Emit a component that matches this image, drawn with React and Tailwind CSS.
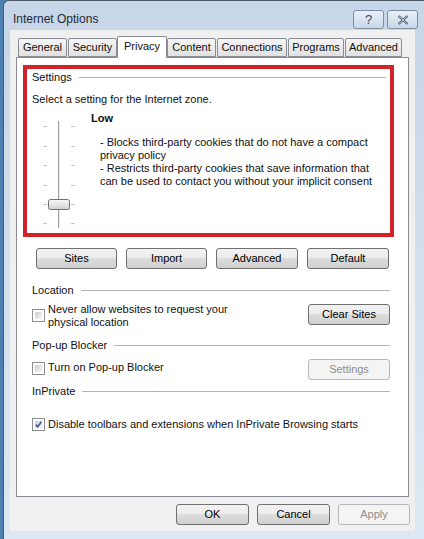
import React from "react";

const tabs = [
  { label: "General", w: "w-[49px]", ml: "ml-0" },
  { label: "Security", w: "w-[49px]", ml: "ml-[1px]" },
  { label: "Privacy", w: "w-[50px]", ml: "ml-0", active: true },
  { label: "Content", w: "w-[49px]", ml: "ml-0" },
  { label: "Connections", w: "w-[70px]", ml: "ml-[1px]" },
  { label: "Programs", w: "w-[56px]", ml: "ml-[1px]" },
  { label: "Advanced", w: "w-[57px]", ml: "ml-[1px]" },
];

const Btn = ({ children, w, disabled }) => (
  <div
    className={`h-[21px] ${w} shrink-0 flex items-center justify-center rounded-[3px] border ${
      disabled
        ? "border-[#b5b9bc] text-[#8d8d8d] bg-[#f4f4f4]"
        : "border-[#707070] bg-[linear-gradient(#f2f2f2,#ebebeb_50%,#dddddd_50%,#cfcfcf)] text-black"
    }`}
  >
    {children}
  </div>
);

const Group = ({ label }) => (
  <div className="flex items-center h-[13px]">
    <span>{label}</span>
    <div className="flex-1 ml-[7px] border-t border-[#b4b4b4]" />
  </div>
);

const Check = ({ checked }) => (
  <div className="w-[13px] h-[13px] shrink-0 border border-[#8e8f8f] bg-white p-[2px]">
    <div className="w-full h-full bg-linear-to-br from-[#cbcfd5] to-[#f6f6f6] relative">
      {checked && (
        <svg viewBox="0 0 7 7" className="absolute inset-0 w-full h-full">
          <path d="M0.8 3.6 L2.8 5.8 L6.4 0.8" fill="none" stroke="#3d5a9e" strokeWidth="1.6" />
        </svg>
      )}
    </div>
  </div>
);

const Slider = () => {
  const ticks = [14, 34, 53, 73, 92, 111];
  return (
    <svg width="40" height="120" className="shrink-0 ml-[13px]">
      {ticks.map((y) => (
        <g key={y}>
          <line x1="3" x2="7" y1={y + 0.5} y2={y + 0.5} stroke="#c8c8c8" />
          <line x1="31" x2="35" y1={y + 0.5} y2={y + 0.5} stroke="#c8c8c8" />
        </g>
      ))}
      <line x1="18.5" x2="18.5" y1="9" y2="116" stroke="#a0a0a0" />
      <line x1="19.5" x2="19.5" y1="9" y2="116" stroke="#e8e8e8" />
      <defs>
        <linearGradient id="th" x1="0" y1="0" x2="0" y2="1">
          <stop offset="0" stopColor="#f8f8f8" />
          <stop offset="0.5" stopColor="#e6e6e6" />
          <stop offset="1" stopColor="#d0d0d0" />
        </linearGradient>
      </defs>
      <rect x="8.5" y="87.5" width="21" height="10" rx="2" fill="url(#th)" stroke="#707070" />
    </svg>
  );
};

export default function App() {
  return (
    <div className="w-[424px] h-[539px] overflow-hidden bg-[#4d7fb0] pl-[3px] font-['Liberation_Sans',Arial,sans-serif] text-[11px] leading-[13px] text-[#111]">
      <div className="h-full border-l border-t border-[#505a66] rounded-tl-[6px] bg-linear-to-b from-[#c7d6e8] to-[#dde8f4] flex flex-col">
        {/* title bar */}
        <div className="h-[29px] flex items-start">
          <div className="ml-[9px] mt-[11px] text-[12px] leading-[14px] text-[#1e2a36]">Internet Options</div>
          <div className="ml-auto mt-[9px] flex gap-[3px] mr-[6px]">
            <div className="w-[31px] h-[19px] rounded-[3px] border border-[#7d8ea3] bg-linear-to-b from-[#e9f0f8] to-[#c9d7e7] flex items-center justify-center text-[13px] text-[#3b4a5c]">
              ?
            </div>
            <div className="w-[31px] h-[19px] rounded-[3px] border border-[#7d8ea3] bg-linear-to-b from-[#e9f0f8] to-[#c9d7e7] flex items-center justify-center">
              <svg width="12" height="10" viewBox="0 0 12 10">
                <path d="M1.5 1 L10.5 9 M10.5 1 L1.5 9" stroke="#3b4a5c" strokeWidth="2.2" fill="none" />
                <path d="M1.5 1 L10.5 9 M10.5 1 L1.5 9" stroke="#eef3f9" strokeWidth="0.8" fill="none" />
              </svg>
            </div>
          </div>
        </div>

        {/* client area */}
        <div className="ml-[6px] w-[405px] h-[501px] bg-[#f0f0f0] flex flex-col">
          {/* tabs */}
          <div className="mt-[6px] ml-[8px] h-[21px] flex items-end relative z-10">
            {tabs.map((t) => (
              <div
                key={t.label}
                className={`${t.w} ${t.ml} flex items-center justify-center border border-[#898c95] rounded-t-[2px] ${
                  t.active
                    ? "h-[22px] -mb-px bg-white border-b-0 pb-[3px]"
                    : "h-[19px] bg-linear-to-b from-[#f5f5f5] to-[#e1e1e1]"
                }`}
              >
                {t.label}
              </div>
            ))}
          </div>

          {/* tab panel */}
          <div className="ml-[6px] w-[393px] h-[440px] border border-[#898c95] bg-white flex flex-col">
            {/* highlighted settings box */}
            <div className="mt-[7px] ml-[6px] w-[371px] h-[172px] border-4 border-[#d2232a] flex flex-col pl-[5px] pr-[4px]">
              <div className="mt-[2px]">
                <Group label="Settings" />
              </div>
              <div className="mt-[9px]">Select a setting for the Internet zone.</div>
              <div className="mt-[6px] flex -ml-[5px]">
                <Slider />
                <div className="ml-[11px] flex flex-col">
                  <div className="font-bold">Low</div>
                  <div className="mt-[11px] ml-[9px] flex flex-col">
                    <span>- Blocks third-party cookies that do not have a compact</span>
                    <span>privacy policy</span>
                    <span>- Restricts third-party cookies that save information that</span>
                    <span>can be used to contact you without your implicit consent</span>
                  </div>
                </div>
              </div>
            </div>

            <div className="pl-[15px] pr-[18px] flex flex-col">
              <div className="mt-[11px] ml-[4px] flex gap-[9px]">
                <Btn w="w-[81px]">Sites</Btn>
                <Btn w="w-[81px]">Import</Btn>
                <Btn w="w-[82px]">Advanced</Btn>
                <Btn w="w-[82px]">Default</Btn>
              </div>

              <div className="mt-[15px]">
                <Group label="Location" />
              </div>
              <div className="mt-[6px] flex items-start">
                <div className="mt-[6px]">
                  <Check />
                </div>
                <div className="ml-[3px] flex flex-col">
                  <span>Never allow websites to request your</span>
                  <span>physical location</span>
                </div>
                <div className="ml-auto mt-[1px]">
                  <Btn w="w-[82px]">Clear Sites</Btn>
                </div>
              </div>

              <div className="mt-[10px]">
                <Group label="Pop-up Blocker" />
              </div>
              <div className="mt-[7px] flex items-start">
                <div className="mt-[3px]">
                  <Check />
                </div>
                <div className="ml-[3px] mt-[2px]">Turn on Pop-up Blocker</div>
                <div className="ml-auto">
                  <Btn w="w-[82px]" disabled>
                    Settings
                  </Btn>
                </div>
              </div>

              <div className="mt-[5px]">
                <Group label="InPrivate" />
              </div>
              <div className="mt-[20px] flex items-center">
                <Check checked />
                <div className="ml-[3px]">Disable toolbars and extensions when InPrivate Browsing starts</div>
              </div>
            </div>
          </div>

          {/* dialog buttons */}
          <div className="mt-[7px] mr-[5px] flex justify-end gap-[8px]">
            <Btn w="w-[73px]">OK</Btn>
            <Btn w="w-[73px]">Cancel</Btn>
            <Btn w="w-[72px]" disabled>
              Apply
            </Btn>
          </div>
        </div>
      </div>
    </div>
  );
}
